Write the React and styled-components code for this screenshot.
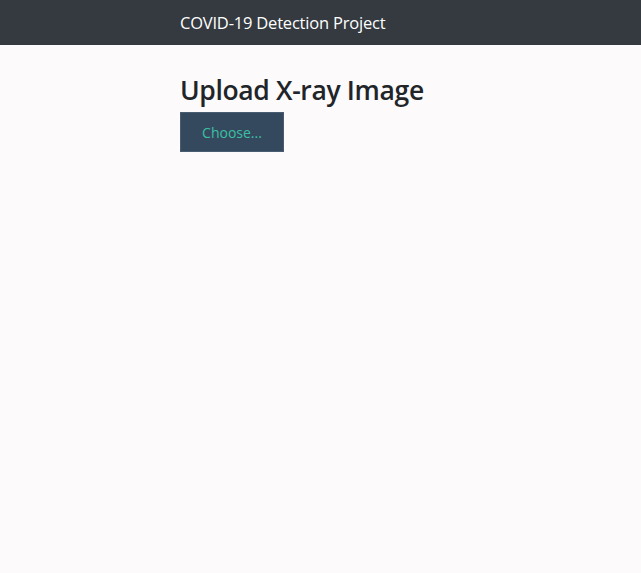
import React from "react";
import styled, { createGlobalStyle } from "styled-components";

const Global = createGlobalStyle`
  html, body { margin: 0; padding: 0; }
  body {
    background: #fcfafa;
    font-family: "Open Sans", "Noto Sans", sans-serif;
    color: #212529;
    min-height: 573px;
  }
`;

const NavBar = styled.header`
  height: 45px;
  background: #343a40;
  display: flex;
  align-items: center;
`;

const Container = styled.div`
  width: 281px;
  margin: 0 auto;
`;

const Brand = styled.span`
  color: #ffffff;
  font-size: 16.5px;
  letter-spacing: -0.2px;
`;

const Main = styled(Container)`
  padding-top: 27px;
`;

const Heading = styled.h1`
  margin: 0 0 4px;
  font-size: 26.5px;
  font-weight: 600;
  line-height: 36px;
  letter-spacing: -0.35px;
  white-space: nowrap;
  color: #212529;
`;

const ChooseButton = styled.label`
  display: flex;
  align-items: center;
  justify-content: center;
  width: 104px;
  height: 40px;
  box-sizing: border-box;
  background: #34495e;
  border: 1px solid #4a5d70;
  color: #3cc0a4;
  font-size: 14px;
  cursor: pointer;
`;

const HiddenInput = styled.input`
  display: none;
`;

export default function App() {
  return (
    <>
      <Global />
      <NavBar>
        <Container>
          <Brand>COVID-19 Detection Project</Brand>
        </Container>
      </NavBar>
      <Main>
        <Heading>Upload X-ray Image</Heading>
        <ChooseButton>
          Choose...
          <HiddenInput type="file" accept="image/*" />
        </ChooseButton>
      </Main>
    </>
  );
}
